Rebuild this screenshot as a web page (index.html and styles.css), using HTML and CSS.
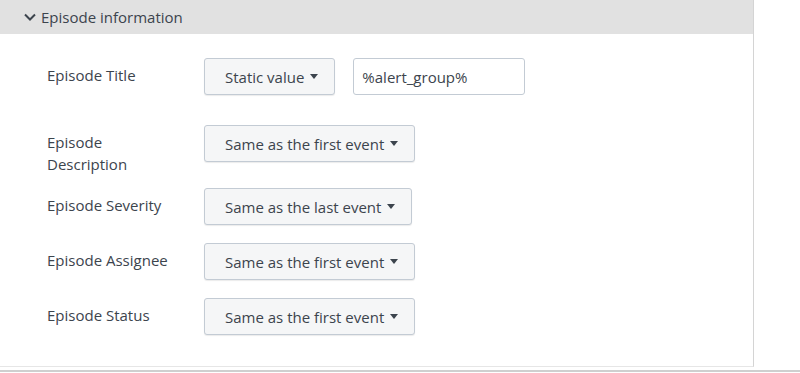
FILE: index.html
```html
<!DOCTYPE html>
<html lang="en">
<head>
    <meta charset="UTF-8">
    <meta name="viewport" content="width=device-width, initial-scale=1.0">
    <title>Episode information</title>
    <link rel="stylesheet" href="styles.css">
</head>
<body>

    <div class="panel">
        <div class="panel-header">
            <svg class="chevron" width="12" height="8" viewBox="0 0 12 8">
                <path d="M1 1.5 L6 6.5 L11 1.5" fill="none" stroke="#3c444d" stroke-width="2"/>
            </svg>
            <span>Episode information</span>
        </div>

        <div class="panel-body">
            <div class="row row-title">
                <div class="label">Episode Title</div>
                <button class="select">Static value <span class="caret"></span></button>
                <input class="text-input" type="text" value="%alert_group%">
            </div>
            <div class="row row-desc">
                <div class="label">Episode Description</div>
                <button class="select">Same as the first event <span class="caret"></span></button>
            </div>
            <div class="row">
                <div class="label">Episode Severity</div>
                <button class="select">Same as the last event <span class="caret"></span></button>
            </div>
            <div class="row">
                <div class="label">Episode Assignee</div>
                <button class="select">Same as the first event <span class="caret"></span></button>
            </div>
            <div class="row">
                <div class="label">Episode Status</div>
                <button class="select">Same as the first event <span class="caret"></span></button>
            </div>
        </div>
    </div>
    <div class="footer-line"></div>

</body>
</html>
```

FILE: styles.css
```css
body {
    margin: 0;
    font-family: "Open Sans", sans-serif;
    font-size: 15px;
    color: #3c444d;
    background: #fff;
}

.panel {
    width: 753px;
    height: 366px;
    border-right: 1px solid #d4d4d4;
    border-bottom: 1px solid #e6e6e6;
    box-sizing: content-box;
}

.panel-header {
    height: 34px;
    background-color: #e1e1e1;
    display: flex;
    align-items: center;
    padding-left: 24px;
    color: #3c444d;
}

.chevron {
    margin-right: 5px;
    margin-top: -1px;
}

.panel-body {
    padding: 24px 0 0 47px;
}

.row {
    display: flex;
    align-items: flex-start;
    margin-bottom: 18px;
}

.row-title {
    margin-bottom: 30px;
}

.row-desc {
    margin-bottom: 13px;
}

.label {
    width: 125px;
    margin-right: 32px;
    line-height: 22px;
    padding-top: 6px;
}

.select {
    height: 37px;
    padding: 0 16px 0 20px;
    background-color: #f5f6f7;
    border: 1px solid #c3cbd4;
    border-radius: 3px;
    box-shadow: 0 1px 1px rgba(0,0,0,0.08);
    font-family: inherit;
    font-size: 15px;
    color: #3c444d;
    display: flex;
    align-items: center;
}

.caret {
    display: inline-block;
    width: 0;
    height: 0;
    margin-left: 6px;
    border-left: 4px solid transparent;
    border-right: 4px solid transparent;
    border-top: 5px solid #3c444d;
}

.text-input {
    margin-left: 18px;
    width: 172px;
    height: 37px;
    box-sizing: border-box;
    padding: 0 8px;
    border: 1px solid #c3cbd4;
    border-radius: 3px;
    font-family: inherit;
    font-size: 15px;
    color: #3c444d;
}

.footer-line {
    margin-top: 3px;
    height: 2px;
    background-color: #cfcfcf;
}
```
